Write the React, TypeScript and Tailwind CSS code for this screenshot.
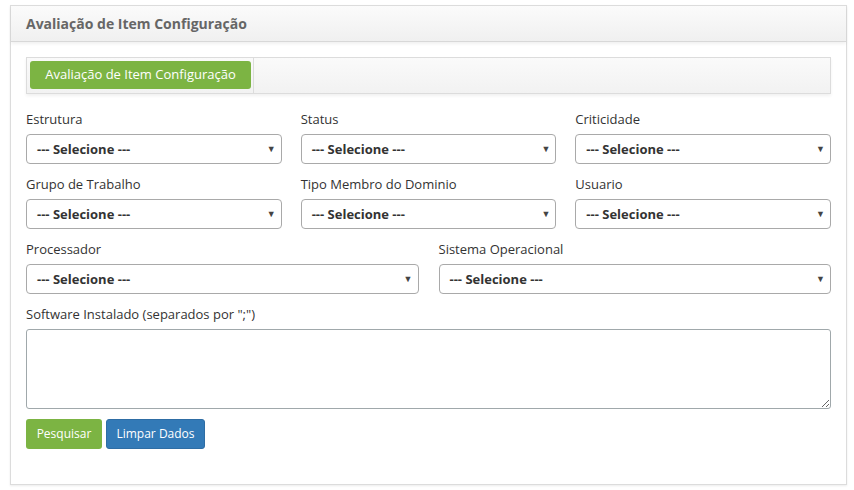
import React from "react";

const font = { fontFamily: '"Open Sans", "Noto Sans", sans-serif' };

function Select({ className = "" }: { className?: string }) {
  return (
    <div
      className={`relative h-[30px] rounded-[4px] border border-[#a9a9a9] bg-white flex items-center pl-[10px] ${className}`}
    >
      <span className="text-[13px] font-bold text-[#333] translate-y-[1px]">--- Selecione ---</span>
      <span className="absolute right-[5px] top-[9px] text-[9px] text-[#444] leading-none">▼</span>
    </div>
  );
}

function Field({ label }: { label: string }) {
  return (
    <div className="flex flex-col">
      <div className="h-[18px] leading-[18px] text-[13px] text-[#333] mb-[6px]">{label}</div>
      <Select />
    </div>
  );
}

export default function App() {
  return (
    <div className="w-[854px] h-[490px] bg-white pt-[5px] pl-[10px]" style={font}>
      <div className="w-[837px] h-[480px] border border-[#dcdcdc] bg-white shadow-[0_1px_2px_rgba(0,0,0,0.08)]">
        <div className="h-[36px] bg-gradient-to-b from-[#fbfbfb] to-[#f0f0f0] border-b border-[#d8d8d8] shadow-[0_2px_3px_rgba(0,0,0,0.06)] flex items-center pl-[15px]">
          <span className="text-[14px] font-bold text-[#666]">Avaliação de Item Configuração</span>
        </div>
        <div className="px-[15px] pt-[15px]">
          <div className="h-[37px] border border-[#dcdcdc] bg-gradient-to-b from-[#fafafa] to-[#f2f2f2] shadow-[0_2px_3px_rgba(0,0,0,0.06)] flex">
            <div className="pl-[3px] pr-[2px] pt-[3px] border-r border-[#dcdcdc]">
              <div className="w-[221px] h-[28px] rounded-[3px] bg-[#7cb443] text-white text-[13px] flex items-center justify-center">
                Avaliação de Item Configuração
              </div>
            </div>
          </div>

          <div className="mt-[16px] grid grid-cols-3 gap-x-[19px] gap-y-[11px]">
            <Field label="Estrutura" />
            <Field label="Status" />
            <Field label="Criticidade" />
            <Field label="Grupo de Trabalho" />
            <Field label="Tipo Membro do Dominio" />
            <Field label="Usuario" />
          </div>
          <div className="mt-[11px] grid grid-cols-2 gap-x-[20px]">
            <Field label="Processador" />
            <Field label="Sistema Operacional" />
          </div>
          <div className="mt-[11px] flex flex-col">
            <div className="h-[18px] leading-[18px] text-[13px] text-[#333] mb-[6px]">
              Software Instalado (separados por ";")
            </div>
            <textarea className="h-[80px] w-full rounded-[3px] border border-[#a0a8ab] bg-white resize-y outline-none" />
          </div>
          <div className="mt-[10px] flex gap-[4px]">
            <button className="h-[30px] w-[76px] rounded-[3px] bg-[#7cb443] text-white text-[12px]">Pesquisar</button>
            <button className="h-[30px] w-[99px] rounded-[3px] bg-[#337ab7] border border-[#2e6da4] text-white text-[12px]">
              Limpar Dados
            </button>
          </div>
        </div>
      </div>
    </div>
  );
}
